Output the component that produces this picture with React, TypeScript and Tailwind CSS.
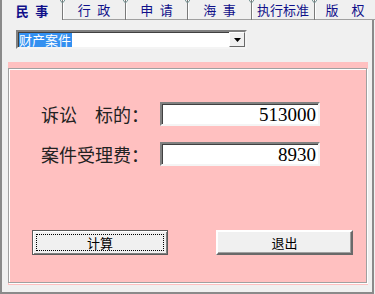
import React from 'react';

const cjk = '"Noto Sans CJK SC", "Noto Sans", sans-serif';

const tabs = [
  { label: '民\u2002事', w: 'w-[62px]' },
  { label: '行\u2002政', w: 'w-[62px]' },
  { label: '申\u2002请', w: 'w-[61px]' },
  { label: '海\u2002事', w: 'w-[63px]' },
  { label: '执行标准', w: 'w-[62px]' },
  { label: '版\u2003权', w: 'flex-1' },
];

// tiny notch drawn on top of each tab separator
const Notch = () => (
  <svg className="absolute -left-[2px] top-0" width="5" height="4" viewBox="0 0 5 4">
    <path d="M0 0 L2.5 3 L5 0" fill="none" stroke="#6f8f8f" strokeWidth="1" />
  </svg>
);

const Field = ({ label, value }: { label: string; value: string }) => (
  <div className="flex items-center">
    <span className="w-[119px] text-[18px] leading-none text-[#222]" style={{ fontFamily: cjk }}>
      {label}
    </span>
    <div className="w-[160px] h-[24px] bg-white border-2 border-t-[#808080] border-l-[#808080] border-r-[#f4f4f4] border-b-[#f4f4f4] shadow-[inset_1px_1px_0_#404040] flex items-center justify-end pr-[2px]">
      <span className="text-[19px] leading-none text-black" style={{ fontFamily: '"Liberation Serif", serif' }}>
        {value}
      </span>
    </div>
  </div>
);

export default function App() {
  return (
    <div className="w-[375px] h-[294px] bg-[#f0f0f0] flex flex-col overflow-hidden" style={{ fontFamily: cjk }}>
      {/* Tabs */}
      <div className="flex h-[20px] shrink-0">
        {tabs.map((t, i) => (
          <React.Fragment key={t.label}>
            {i > 0 && (
              <div className="relative w-[1px] h-full bg-[#7a7a7a]">
                <Notch />
              </div>
            )}
            <div
              className={
                'h-full flex items-center justify-center text-[13px] leading-none text-[#10108a] ' +
                t.w +
                (i === 0 ? ' font-bold border-l-2 border-[#8a8a8a]' : ' border-b border-[#a0a0a0] shadow-[inset_1px_0_0_#ffffff]')
              }
            >
              {t.label}
            </div>
          </React.Fragment>
        ))}
      </div>

      {/* Page */}
      <div className="flex-1 flex flex-col border-l-2 border-r-2 border-b-2 border-[#8a8a8a] mr-[1px]">
        <div className="ml-[14px] mt-[10px] w-[231px] h-[19px] bg-white border-2 border-t-[#808080] border-l-[#808080] border-r-[#f4f4f4] border-b-[#f4f4f4] shadow-[inset_1px_1px_0_#404040] flex items-center justify-between pl-[1px]">
          <span className="bg-[#3390f0] text-white text-[13px] leading-[14px] h-[14px] pr-[1px]">财产案件</span>
          <div className="w-[16px] h-[15px] bg-[#f0f0f0] border border-t-[#ffffff] border-l-[#ffffff] border-r-[#696969] border-b-[#696969] flex items-center justify-center">
            <svg width="7" height="4" viewBox="0 0 7 4">
              <path d="M0 0 H7 L3.5 4 Z" fill="#000" />
            </svg>
          </div>
        </div>

        <div className="ml-[6px] mt-[13px] w-[360px] h-[223px] bg-[#ffc0c0] pt-[6px] pr-[1px] pb-[2px]">
          <div className="w-full h-full border border-[#a0a0a0] shadow-[inset_1px_1px_0_#ffffff,1px_1px_0_#ffffff] flex flex-col">
            <div className="flex flex-col gap-[16px] pl-[32px] pt-[33px]">
              <Field label="诉讼　标的：" value="513000" />
              <Field label="案件受理费：" value="8930" />
            </div>

            <div className="flex gap-[48px] ml-[23px] mt-[64px]">
              <button className="w-[136px] h-[25px] bg-[#f0f0f0] border border-[#5a5a5a] shadow-[inset_1px_1px_0_#ffffff,inset_-1px_-1px_0_#808080] p-[3px]">
                <div className="w-full h-full border border-dotted border-black flex items-center justify-center text-[13px] leading-none text-black">
                  计算
                </div>
              </button>
              <button className="w-[137px] h-[25px] bg-[#f0f0f0] border-2 border-t-[#ffffff] border-l-[#ffffff] border-r-[#696969] border-b-[#696969] shadow-[inset_-1px_-1px_0_#a0a0a0] flex items-center justify-center text-[13px] leading-none text-black">
                退出
              </button>
            </div>
          </div>
        </div>
      </div>
    </div>
  );
}
